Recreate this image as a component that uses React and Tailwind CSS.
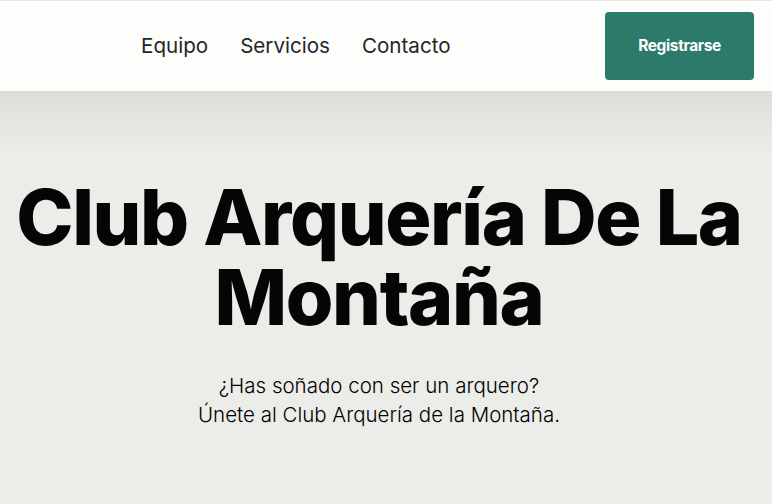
export default function App() {
  return (
    <div className="min-h-[504px] w-full bg-[#ecede9] font-['Inter',sans-serif] text-[#111]">
      <div className="h-px bg-[#e8e8e6]" />
      <header className="flex h-[90px] items-center justify-between bg-[#fdfdfc] pl-[141px] pr-[18px]">
        <nav className="flex items-center gap-8 text-[20.6px] text-[#262626]">
          <a href="#">Equipo</a>
          <a href="#">Servicios</a>
          <a href="#">Contacto</a>
        </nav>
        <button className="h-[68px] w-[149px] rounded-[4px] bg-[#2c7a69] text-[15.5px] font-bold tracking-tight text-white">
          Registrarse
        </button>
      </header>
      <section className="flex flex-col items-center bg-[linear-gradient(to_bottom,#dcddd9_0px,#ecede9_60px)] pb-20 pl-0 pr-[14px] pt-[86px] text-center">
        <h1 className="whitespace-nowrap text-[77px] font-extrabold leading-[80px] tracking-[-0.018em] text-[#050505]">
          Club Arquería De La
          <br />
          Montaña
        </h1>
        <p className="mt-[34px] text-[20.5px] font-light leading-[29px] text-black">
          ¿Has soñado con ser un arquero?
          <br />
          Únete al Club Arquería de la Montaña.
        </p>
      </section>
    </div>
  );
}
